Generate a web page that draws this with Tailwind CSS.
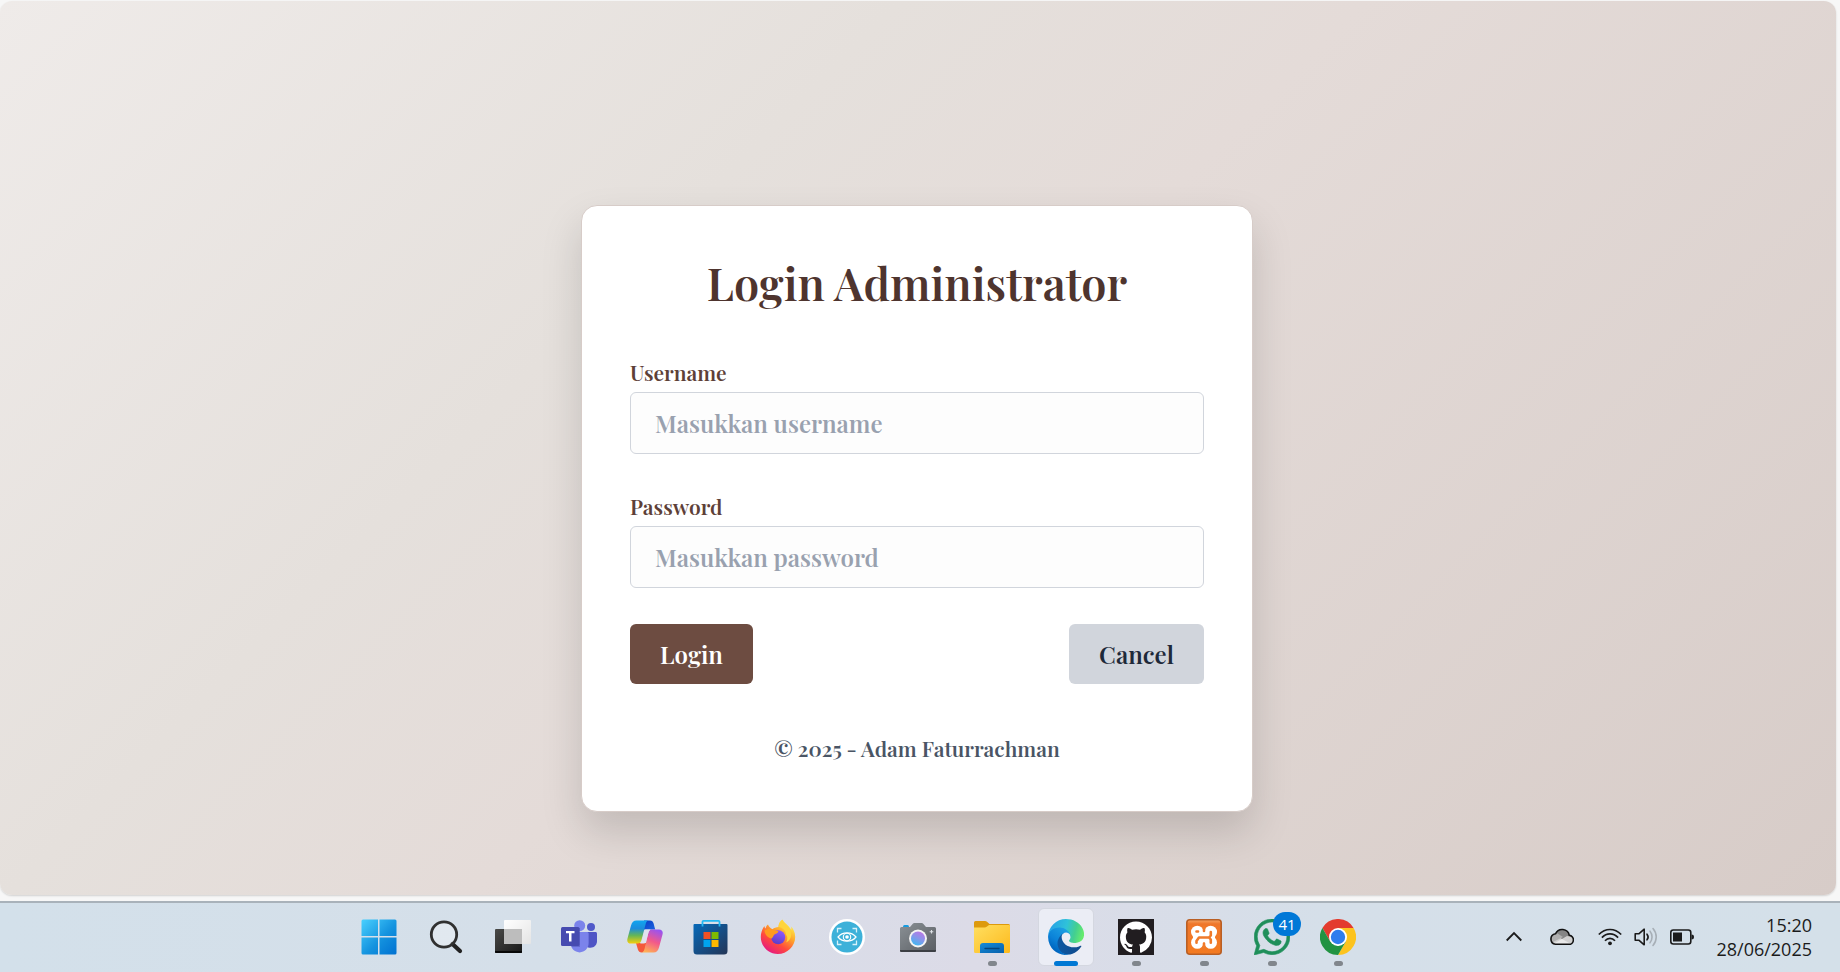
<!DOCTYPE html>
<html lang="id">
<head>
<meta charset="utf-8">
<meta name="viewport" content="width=device-width, initial-scale=1">
<title>Login Administrator</title>
<script src="https://cdn.jsdelivr.net/npm/@tailwindcss/browser@4"></script>
</head>
<body class="flex min-h-screen flex-col bg-[#f7f7f7] font-['Playfair_Display','Liberation_Serif',serif] font-semibold">

<main class="mt-px mr-1 mb-1.5 flex flex-1 items-center justify-center rounded-xl bg-linear-[135deg,#efebe9_0%,#e5e0dc_33%,#e4dbd8_50%,#d7ccc8_100%] pt-[120px] pr-0.5 shadow-[0_1px_2px_rgba(0,0,0,0.15)]">
  <form class="flex w-full max-w-2xl flex-col rounded-2xl border border-[#d7ccc8] bg-white p-12 shadow-[0_20px_40px_rgba(0,0,0,0.15)]">
    <h1 class="mb-[47px] text-center text-[45px] leading-14 text-[#4e342e]">Login Administrator</h1>
    <label for="username" class="mb-[5px] text-[21px] leading-[30px] text-[#5d4037]">Username</label>
    <input id="username" type="text" placeholder="Masukkan username" class="mb-[37px] h-[62px] w-full rounded-md border border-gray-300 bg-[#fdfdfd] px-6 text-2xl placeholder:text-gray-400">
    <label for="password" class="mb-[5px] text-[21px] leading-[30px] text-[#5d4037]">Password</label>
    <input id="password" type="password" placeholder="Masukkan password" class="mb-9 h-[62px] w-full rounded-md border border-gray-300 bg-[#fdfdfd] px-6 text-2xl placeholder:text-gray-400">
    <div class="mb-[49px] flex justify-between">
      <button type="submit" class="h-[60px] rounded-md bg-[#6d4c41] px-[30px] text-2xl text-white">Login</button>
      <button type="button" class="h-[60px] rounded-md bg-gray-300 px-[30px] text-2xl text-gray-800">Cancel</button>
    </div>
    <p class="text-center text-[21px] leading-[30px] text-gray-600">© 2025 - Adam Faturrachman</p>
  </form>
</main>

<footer class="flex h-[71px] items-stretch border-t-2 border-[#a9b2ba] bg-linear-[90deg,#d3e0ea_0%,#d5dfe9_30%,#dcdbe7_53%,#d5dfe9_72%,#d4e0e9_100%] pb-0.5 pl-[345px] font-['Segoe_UI','Open_Sans',sans-serif] font-normal">
  <nav aria-label="Taskbar" class="flex items-stretch">
    <button aria-label="Start" class="flex w-[67px] items-center justify-center">
      <svg class="size-9" viewBox="0 0 36 36"><defs><linearGradient id="win" x1="0" y1="0" x2="36" y2="36" gradientUnits="userSpaceOnUse"><stop stop-color="#4bd2ff"/><stop offset=".55" stop-color="#1493df"/><stop offset="1" stop-color="#0070d0"/></linearGradient></defs><path fill="url(#win)" d="M2 .5h15v16.500H.5V2A1.500 1.500 0 0 1 2 .5zM18.500.5H34A1.500 1.500 0 0 1 35.500 2v15h-17zM.5 18.500H17v17H2A1.500 1.500 0 0 1 .5 34zM18.500 18.500h17V34a1.500 1.500 0 0 1-1.500 1.500H18.500z"/></svg>
    </button>
    <button aria-label="Search" class="flex w-[68px] items-center justify-center">
      <svg class="size-9" viewBox="0 0 36 36" fill="none"><path d="M24.500 25 32 32" stroke="#222" stroke-width="4.200" stroke-linecap="round"/><circle cx="16" cy="15.500" r="12.700" fill="#fff" fill-opacity=".3" stroke="#303030" stroke-width="2.800"/></svg>
    </button>
    <button aria-label="Task view" class="flex w-[66px] items-center justify-center">
      <svg class="size-9" viewBox="0 0 36 36"><defs><linearGradient id="tvd" x1="0" y1="0" x2="1" y2="1"><stop stop-color="#4a4a48"/><stop offset="1" stop-color="#181818"/></linearGradient><linearGradient id="tvl" x1="0" y1="0" x2="1" y2="1"><stop stop-color="#fff"/><stop offset="1" stop-color="#e4e4e4"/></linearGradient></defs><rect x="0" y="10" width="27" height="24" rx="1" fill="url(#tvd)"/><path d="M0 32h27v1a1 1 0 0 1-1 1H1a1 1 0 0 1-1-1z" fill="#080808"/><rect x="9" y="1" width="27" height="24" rx="1" fill="url(#tvl)"/><path d="M9 10h18v15H10a1 1 0 0 1-1-1z" fill="#bdbdbd"/></svg>
    </button>
    <button aria-label="Microsoft Teams" class="flex w-[66px] items-center justify-center">
      <svg class="size-9" viewBox="0 0 36 36"><circle cx="30" cy="8" r="4" fill="#5059c9"/><path fill="#4f55c5" d="M25 13h9.500c.8 0 1.500.7 1.500 1.500V22c0 4-3 6.700-6.500 6.700-1.700 0-3-.4-4.500-1.500z"/><circle cx="18.700" cy="6.700" r="5.500" fill="#7b83eb"/><path fill="#7b83eb" d="M10 13h16c.9 0 1.600.7 1.600 1.600v9.500c0 5.300-4 9.300-9 9.300s-9-4-9-9.300z"/><path fill="#3a3f9c" fill-opacity=".35" d="M9.500 9H19v19H11c-1-1.500-1.500-3-1.500-5z"/><rect x="0" y="8" width="18.500" height="19" rx="1.500" fill="#464bb0"/><path fill="#fff" d="M5 12h8.500v2.200h-3V22.500H8v-8.300H5z"/></svg>
    </button>
    <button aria-label="Copilot" class="flex w-[66px] items-center justify-center">
      <svg class="size-9" viewBox="0 0 36 36"><defs><linearGradient id="cp1" x1="0" y1="0" x2="0" y2="1"><stop stop-color="#10a5ef"/><stop offset=".35" stop-color="#1c8ddc"/><stop offset=".65" stop-color="#64b657"/><stop offset="1" stop-color="#f5cf0b"/></linearGradient><linearGradient id="cp2" x1=".7" y1="0" x2=".3" y2="1"><stop stop-color="#9a53ef"/><stop offset=".5" stop-color="#f2598a"/><stop offset="1" stop-color="#ffb055"/></linearGradient><linearGradient id="cp3" x1="0" y1="0" x2="1" y2="1"><stop stop-color="#0a3fc5"/><stop offset="1" stop-color="#1b63e0"/></linearGradient></defs><path fill="url(#cp3)" d="M17 1.500h6c2 0 3 1 3.600 3l1.600 6H17z"/><path fill="#f4593a" d="M19.500 24 18.500 29c-.9 3-2 4.500-4 4.500-1.700 0-3-1-3.600-3L9 24z"/><path fill="url(#cp1)" d="M9.500 1.500H22c-1.700 0-2.600 1.200-3.200 3L14.500 21c-.8 2.500-1.700 3.500-4 3.500H4c-3 0-4.300-2-3.500-5L4 6.500c1-3.400 2.500-5 5.500-5z"/><path fill="url(#cp2)" d="M26.500 33.500H14c1.800 0 2.800-1.200 3.400-3L21.300 14c.8-2.500 1.700-3.500 4-3.500H32c3 0 4.300 2 3.500 5l-3.500 13c-1 3.400-2.500 5-5.500 5z"/><path fill="#e0e3ee" d="M17.500 11.500c.3-.7.700-1 1.500-1h4.500c-1.200.8-1.700 2-2 3l-2.500 9c-.3 1.300-.8 2-2 2h-4c1-.5 1.500-1.500 1.800-2.500z"/></svg>
    </button>
    <button aria-label="Microsoft Store" class="flex w-[66px] items-center justify-center">
      <svg class="size-9" viewBox="0 0 36 36"><defs><linearGradient id="st" x1="0" y1="0" x2="1" y2="1"><stop stop-color="#0669b9"/><stop offset="1" stop-color="#243556"/></linearGradient></defs><path fill="url(#st)" d="M1.500 5h32a1 1 0 0 1 1 1v26a3.500 3.500 0 0 1-3.500 3.500H4A3.500 3.500 0 0 1 .5 32V6a1 1 0 0 1 1-1z"/><path fill="none" stroke="#23b8f2" stroke-width="1.800" d="M9.500 7.500V2.800a1 1 0 0 1 1-1h15a1 1 0 0 1 1 1v4.700"/><path fill="#f25022" d="M10.500 13h7v7h-7z"/><path fill="#7fba00" d="M18.500 13h7v7h-7z"/><path fill="#00a4ef" d="M10.500 21h7v7h-7z"/><path fill="#ffb900" d="M18.500 21h7v7h-7z"/></svg>
    </button>
    <button aria-label="Firefox" class="flex w-[68px] items-center justify-center">
      <svg class="size-9" viewBox="0 0 36 36"><defs><linearGradient id="ff" x1=".85" y1=".1" x2=".25" y2="1"><stop stop-color="#fff44f"/><stop offset=".35" stop-color="#ffa52a"/><stop offset=".65" stop-color="#ff4a3d"/><stop offset="1" stop-color="#e31587"/></linearGradient><linearGradient id="ffp" x1=".7" y1="0" x2=".3" y2="1"><stop stop-color="#9059ff"/><stop offset="1" stop-color="#5b3cc4"/></linearGradient></defs><path fill="url(#ff)" d="M22.500.500c-3 2-4 5-4 7.500-2.500 0-4.500 1-6 2.200C10 9 8.500 7 8 5.500 6.500 6.500 6 8 5.500 9.500 5 9 4.500 8 4.500 7 2 10 .8 14 .8 18c0 9.300 7.600 17 17 17s17.400-7.700 17.400-17c0-5-2.200-8.500-4-10.500.2 1.500.2 2.500 0 3.500-1.500-3.500-4.500-5.500-6.500-7.500-1-1-1.700-2-2.200-3z"/><circle cx="18.200" cy="18.300" r="7" fill="url(#ffp)"/><path fill="#ff9a1f" d="M4.500 11.500c3-2 7-2 9.500 0 2 .2 4 .3 4.300.8.200 1.800-3.300 2.700-4.300 3.700-.8.800-.5 2.200-2.500 3.500-3-.5-6.500-3-7-8z"/><path fill="#ffd43b" d="M22.500.5c-3 2-4 5-4 7.500 4 .5 7.500 3.500 7.500 7.500 2 2.500 1.500 6 0 8 5-2 6.500-8 4-13-1.500-3.500-5.300-6-6.300-7.500-.5-.8-.8-1.500-1.200-2.500z"/></svg>
    </button>
    <button aria-label="Eye scanner" class="flex w-[70px] items-center justify-center">
      <svg class="size-9" viewBox="0 0 36 36" fill="none"><circle cx="18" cy="18" r="18" fill="#fff"/><circle cx="18" cy="18" r="15.500" fill="#3db1d9"/><path stroke="#d5f2fa" stroke-width="1.300" d="M8.500 13.500v-4h4M23.500 9.500h4v4M27.500 21.500v4h-4M12.500 25.500h-4v-4"/><path stroke="#fff" stroke-width="1.200" d="M9 18c4.500-5.500 13.500-5.500 18 0-4.500 5.500-13.500 5.500-18 0z"/><circle cx="18" cy="18" r="3.700" stroke="#fff" stroke-width="1.100"/><circle cx="18" cy="18" r="1.800" fill="#fff"/></svg>
    </button>
    <button aria-label="Camera" class="flex w-[72px] items-center justify-center">
      <svg class="size-9" viewBox="0 0 36 36"><defs><linearGradient id="cam" x1="0" y1="0" x2="1" y2="1"><stop stop-color="#8a9095"/><stop offset="1" stop-color="#5a5e63"/></linearGradient><linearGradient id="lens" x1=".8" y1="0" x2=".3" y2="1"><stop stop-color="#c074e6"/><stop offset=".5" stop-color="#8796ea"/><stop offset="1" stop-color="#3fb8f2"/></linearGradient></defs><rect x="3" y="6" width="6" height="4" rx="1.500" fill="#169be0"/><path fill="url(#cam)" d="M1.500 8H10l2.800-3.200A2 2 0 0 1 14.300 4h7.400a2 2 0 0 1 1.500.8L26 8h8.500A1.500 1.500 0 0 1 36 9.500v22a1.500 1.500 0 0 1-1.500 1.500h-33A1.500 1.500 0 0 1 0 31.500v-22A1.500 1.500 0 0 1 1.500 8z"/><path fill="#3c3f44" d="M0 31h36v.5a1.500 1.500 0 0 1-1.500 1.500h-33A1.500 1.500 0 0 1 0 31.500z"/><circle cx="18" cy="19.500" r="9" fill="#f4f4f4"/><circle cx="18" cy="19.500" r="7" fill="url(#lens)"/><path stroke="#dfe3e6" stroke-width="1.100" d="M31.500 11v3.500M29.700 12.700h3.600"/></svg>
    </button>
    <button aria-label="File Explorer" class="relative flex w-[76px] items-center justify-center">
      <svg class="size-9" viewBox="0 0 36 36"><defs><linearGradient id="fe" x1="0" y1="0" x2="1" y2="1"><stop stop-color="#ffdf60"/><stop offset="1" stop-color="#fdb91c"/></linearGradient><linearGradient id="feb" x1="0" y1="0" x2="1" y2="1"><stop stop-color="#158bd9"/><stop offset="1" stop-color="#0961ac"/></linearGradient></defs><path fill="#dd9a0c" d="M1.500 2H11c.8 0 1.500.3 2 .8L15.500 5H34.500A1.500 1.500 0 0 1 36 6.500V12H0V3.500A1.500 1.500 0 0 1 1.500 2z"/><path fill="url(#fe)" d="M0 8.500h10.500c1 0 1.800-.3 2.500-.9l2-1.600h20A1 1 0 0 1 36 7v25.500a1.500 1.500 0 0 1-1.500 1.500h-33A1.500 1.500 0 0 1 0 32.500z"/><path fill="url(#feb)" d="M9 24h18a3 3 0 0 1 3 3v7H6v-7a3 3 0 0 1 3-3z"/><path stroke="#07457c" stroke-width="1.300" stroke-linecap="round" d="M11 29.500h14"/></svg>
      <span class="absolute bottom-1 h-[5px] w-[9px] rounded-full bg-[#81868c]"></span>
    </button>
    <button aria-label="Microsoft Edge" class="relative flex w-[72px] items-center justify-center">
      <span class="flex h-[58px] w-14 items-center justify-center rounded-md border border-[#d4d7e0] bg-[#ebedf5]">
        <svg class="size-9" viewBox="0 0 256 256"><defs><linearGradient id="e1" x1="60" y1="180" x2="238" y2="180" gradientUnits="userSpaceOnUse"><stop stop-color="#0c59a4"/><stop offset="1" stop-color="#114a8b"/></linearGradient><linearGradient id="e2" x1="140" y1="90" x2="50" y2="220" gradientUnits="userSpaceOnUse"><stop stop-color="#1b9de2"/><stop offset=".6" stop-color="#0b82d8"/><stop offset="1" stop-color="#0067c0"/></linearGradient><linearGradient id="e3" x1="20" y1="60" x2="245" y2="120" gradientUnits="userSpaceOnUse"><stop stop-color="#27a5e5"/><stop offset=".45" stop-color="#2fc2d9"/><stop offset=".75" stop-color="#43cf90"/><stop offset="1" stop-color="#66eb6e"/></linearGradient></defs><path fill="url(#e1)" d="M231 190.500c-3.400 1.800-6.900 3.400-10.500 4.700a101.500 101.500 0 0 1-35.600 6.400c-47 0-87.900-32.300-87.900-73.800 0-11.400 6.300-21.800 16.400-27.400-42.500 1.800-53.400 46.100-53.400 72 0 73.400 67.600 80.800 82.200 80.800 7.900 0 19.700-2.300 26.800-4.600l1.300-.4a128.300 128.300 0 0 0 66.600-52.800 4 4 0 0 0-5.900-4.900z"/><path fill="url(#e2)" d="M105.700 241.400a79.200 79.200 0 0 1-22.700-21.300 80.700 80.700 0 0 1 29.900-120c3.200-1.500 8.500-4.100 15.600-4a32.400 32.400 0 0 1 25.700 13 31.900 31.900 0 0 1 6.300 18.700c0-.2 24.500-79.600-80-79.600-43.900 0-80 41.700-80 78.200a130.200 130.200 0 0 0 12.100 56 128 128 0 0 0 156.400 67 75.500 75.500 0 0 1-62.800-8z"/><path fill="url(#e3)" d="M152.300 148.900c-.8 1-3.300 2.500-3.300 5.700 0 2.600 1.700 5.200 4.800 7.300 14.400 10.100 41.700 8.700 41.700 8.700 10.700 0 21.300-2.900 30.500-8.300a61.800 61.800 0 0 0 30.400-53.200c.3-22.400-8-37.300-11.300-43.900C223.900 23.600 177.700 0 127.500 0A128 128 0 0 0 0 126.200c.5-36.500 36.800-66 80-66 3.500 0 23.500.3 42 10.100 16.300 8.600 24.900 18.900 30.800 29.200 6.200 10.700 7.300 24.100 7.300 29.500s-2.700 13.300-7.800 19.900z"/></svg>
      </span>
      <span class="absolute bottom-1 h-[5px] w-6 rounded-full bg-[#0078d4]"></span>
    </button>
    <button aria-label="GitHub Desktop" class="relative flex w-[68px] items-center justify-center">
      <svg class="size-9" viewBox="0 0 36 36"><path fill="#211d20" d="M0 0h36v36H0z"/><path fill="#fff" transform="translate(2 2.500) scale(2)" d="M8 0C3.580 0 0 3.580 0 8c0 3.540 2.290 6.530 5.470 7.590.4.070.55-.17.55-.38 0-.19-.01-.82-.01-1.490-2.010.37-2.530-.49-2.690-.94-.09-.23-.48-.94-.82-1.130-.28-.15-.68-.52-.01-.53.63-.01 1.080.58 1.230.82.72 1.210 1.870.87 2.330.66.070-.52.28-.87.51-1.070-1.780-.2-3.640-.89-3.640-3.950 0-.87.31-1.590.82-2.150-.08-.2-.36-1.020.08-2.120 0 0 .67-.21 2.200.82.640-.18 1.320-.27 2-.27s1.360.09 2 .27c1.530-1.040 2.200-.82 2.200-.82.440 1.100.16 1.920.08 2.120.51.560.82 1.270.82 2.150 0 3.070-1.870 3.750-3.650 3.950.29.25.54.73.54 1.480 0 1.070-.01 1.930-.01 2.200 0 .21.15.46.55.38A8.010 8.010 0 0 0 16 8c0-4.420-3.580-8-8-8z"/></svg>
      <span class="absolute bottom-1 h-[5px] w-[9px] rounded-full bg-[#81868c]"></span>
    </button>
    <button aria-label="XAMPP" class="relative flex w-[68px] items-center justify-center">
      <svg class="size-9" viewBox="0 0 36 36" fill="none"><defs><linearGradient id="xa" x1="0" y1="0" x2="0" y2="1"><stop stop-color="#f3a566"/><stop offset=".12" stop-color="#ef762a"/><stop offset="1" stop-color="#f37a20"/></linearGradient></defs><rect x=".8" y=".8" width="34.400" height="34.400" rx="3" fill="url(#xa)" stroke="#b95f24" stroke-width="1.600"/><g fill="#fff"><circle cx="11.300" cy="13" r="6.300"/><circle cx="24.700" cy="13" r="6.300"/><circle cx="11.300" cy="23.500" r="6.300"/><circle cx="24.700" cy="23.500" r="6.300"/><path d="M7 13h22v10.500H7z"/></g><path stroke="#f07a2a" stroke-width="2.600" stroke-linecap="round" stroke-linejoin="round" d="M18 7.500v4.500M18 29v-4.500M10.500 12.500h1.500M10.500 23.800v-1.800l2.500-3.500h10l1.800-2v-3.500M23 18.500l1.800 2v3.300"/></svg>
      <span class="absolute bottom-1 h-[5px] w-[9px] rounded-full bg-[#81868c]"></span>
    </button>
    <button aria-label="WhatsApp, 41" class="relative flex w-[68px] items-center justify-center">
      <svg class="size-9" viewBox="0 0 24 24"><path fill="#1f8f5a" stroke="#1f8f5a" stroke-width=".4" d="M17.472 14.382c-.297-.149-1.758-.867-2.030-.967-.273-.099-.471-.148-.67.15-.197.297-.767.966-.94 1.164-.173.199-.347.223-.644.075-.297-.15-1.255-.463-2.390-1.475-.883-.788-1.480-1.761-1.653-2.059-.173-.297-.018-.458.13-.606.134-.133.298-.347.446-.52.149-.174.198-.298.298-.497.099-.198.05-.371-.025-.52-.075-.149-.669-1.612-.916-2.207-.242-.579-.487-.5-.669-.51-.173-.008-.371-.01-.57-.01-.198 0-.52.074-.792.372-.272.297-1.040 1.016-1.040 2.479 0 1.462 1.065 2.875 1.213 3.074.149.198 2.096 3.200 5.077 4.487.709.306 1.262.489 1.694.625.712.227 1.360.195 1.871.118.571-.085 1.758-.719 2.006-1.413.248-.694.248-1.289.173-1.413-.074-.124-.272-.198-.57-.347m-5.421 7.403h-.004a9.870 9.870 0 01-5.031-1.378l-.361-.214-3.741.982.998-3.648-.235-.374a9.860 9.860 0 01-1.510-5.260c.001-5.450 4.436-9.884 9.888-9.884 2.640 0 5.122 1.030 6.988 2.898a9.825 9.825 0 012.893 6.994c-.003 5.450-4.437 9.884-9.885 9.884m8.413-18.297A11.815 11.815 0 0012.050 0C5.495 0 .16 5.335.157 11.892c0 2.096.547 4.142 1.588 5.945L.057 24l6.305-1.654a11.882 11.882 0 005.683 1.448h.005c6.554 0 11.890-5.335 11.893-11.893a11.821 11.821 0 00-3.480-8.413Z"/></svg>
      <span class="absolute top-[9px] right-[5px] flex h-6 w-7 items-center justify-center rounded-full bg-[#0078d7] text-[15px] text-white">41</span>
      <span class="absolute bottom-1 h-[5px] w-[9px] rounded-full bg-[#81868c]"></span>
    </button>
    <button aria-label="Google Chrome" class="relative flex w-16 items-center justify-center">
      <svg class="size-9" viewBox="0 0 36 36"><path fill="#e33b2e" d="M18 18V9h15.600A18 18 0 0 0 2.400 9l7.800 13.500z"/><path fill="#fcc31e" d="M18 9h15.600A18 18 0 0 1 18 36l7.800-13.500z"/><path fill="#229342" d="M25.800 22.500 18 36A18 18 0 0 1 2.400 9l7.800 13.500L18 27z"/><circle cx="18" cy="18" r="9" fill="#fff"/><circle cx="18" cy="18" r="7.200" fill="#2f7ded"/></svg>
      <span class="absolute bottom-1 h-[5px] w-[9px] rounded-full bg-[#81868c]"></span>
    </button>
  </nav>

  <div class="ml-auto flex items-center pr-7 text-[#1b1b1b]">
    <button aria-label="Show hidden icons" class="mr-7"><svg class="h-6 w-4" viewBox="0 0 16 24" fill="none" stroke="currentColor" stroke-width="1.800"><path d="m.7 15.500 7.300-7.500 7.300 7.500"/></svg></button>
    <button aria-label="OneDrive" class="mr-6"><svg class="size-6" viewBox="0 0 24 24"><defs><clipPath id="cl"><path d="M5.500 19.300h13a4.500 4.500 0 0 0 .8-9 7.300 7.300 0 0 0-13.800-1.500A5.300 5.300 0 0 0 5.500 19.300z"/></clipPath></defs><g clip-path="url(#cl)"><path fill="#d0d0d0" d="M0 0h24v24H0z"/><path fill="#858585" d="M4 2h18v10l-5-1-5 3L4 9z"/><path fill="#b0b0b0" d="m0 8 6-.5 7 4.500-12 6z"/><path fill="#e8e8e8" d="m2 19.500 10-5.500 10 5.500z"/></g><path fill="none" stroke="#111" stroke-width="1.600" d="M5.500 19.300h13a4.500 4.500 0 0 0 .8-9 7.300 7.300 0 0 0-13.800-1.500A5.300 5.300 0 0 0 5.500 19.300z"/></svg></button>
    <button aria-label="Network, volume and battery" class="mr-[22px] flex gap-3">
      <svg class="size-6" viewBox="0 0 24 24" fill="none" stroke="currentColor" stroke-width="1.700"><path d="M.8 9.500c6.500-6.700 15.900-6.700 22.400 0M3.900 12.700c4.700-5 11.500-5 16.200 0M7 15.700c2.900-3.200 7.100-3.200 10 0"/><circle cx="12" cy="18.300" r="1.900" fill="currentColor" stroke="none"/></svg>
      <svg class="size-6" viewBox="0 0 24 24" fill="none" stroke-width="1.600" stroke-linejoin="round" stroke-linecap="round"><path stroke="currentColor" d="M1.200 8.800h3.600l5.400-4.600v15.600l-5.400-4.600H1.200zM13 9.200c1.300 1.600 1.300 4 0 5.600"/><path stroke="#a7afb6" d="M16 6.200c2.700 3.200 2.700 8.400 0 11.600M19 3.500c4.300 5 4.300 12 0 17"/></svg>
      <svg class="size-6" viewBox="0 0 24 24" fill="none"><rect x=".8" y="5" width="20" height="14" rx="2.500" stroke="currentColor" stroke-width="1.600"/><path fill="currentColor" d="M3 7.500h9v9H3zM21.500 9.500c1.600 0 2.500.8 2.500 2.500s-.9 2.500-2.500 2.500z"/></svg>
    </button>
    <div class="flex flex-col items-end text-lg leading-6"><time>15:20</time><time>28/06/2025</time></div>
  </div>
</footer>
</body>
</html>
